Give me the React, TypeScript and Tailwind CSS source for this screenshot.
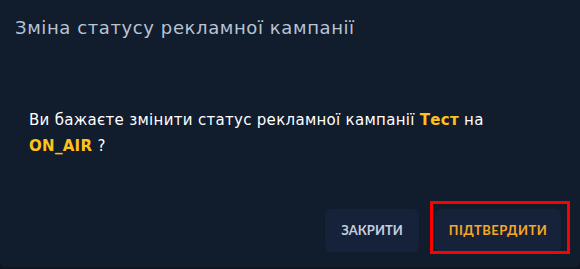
import React from 'react';

export default function App() {
  return (
    <div className="w-[580px] h-[269px] bg-[#0d1522] font-['DejaVu_Sans','Noto_Sans',sans-serif]">
      <div className="relative h-[267px] rounded-b-md bg-[#111c2d] flex flex-col">
        {/* Title */}
        <div className="h-[54px] flex items-center pl-[15px]">
          <h2 className="text-[18px] tracking-[0.6px] text-[#b8c3d4]">Зміна статусу рекламної кампанії</h2>
        </div>

        {/* Body */}
        <div className="pt-[53px] pl-[29px] w-[530px] text-[15px] tracking-[0.3px] leading-[26px] text-white">
          Ви бажаєте змінити статус рекламної кампанії <span className="font-bold text-[#ffc21a]">Тест</span> на{' '}
          <span className="font-bold text-[#ffc21a]">ON_AIR</span> ?
        </div>

        {/* Actions */}
        <div className="mt-auto mb-[15px] flex justify-end gap-4 pr-[19px] font-['Lato',sans-serif]">
          <button className="h-[43px] w-[94px] rounded-md bg-[#15223a] text-[13px] font-bold text-[#c5cede] uppercase">
            Закрити
          </button>
          <div className="relative">
            <button className="h-[43px] w-[126px] rounded-md bg-[#15223a] text-[13px] font-bold text-[#f5a623] uppercase tracking-[0.5px]">
              Підтвердити
            </button>
            <div className="absolute -left-[5px] -top-[8px] w-[140px] h-[53px] border-[3px] border-[#ff0000] pointer-events-none" />
          </div>
        </div>
      </div>
    </div>
  );
}
